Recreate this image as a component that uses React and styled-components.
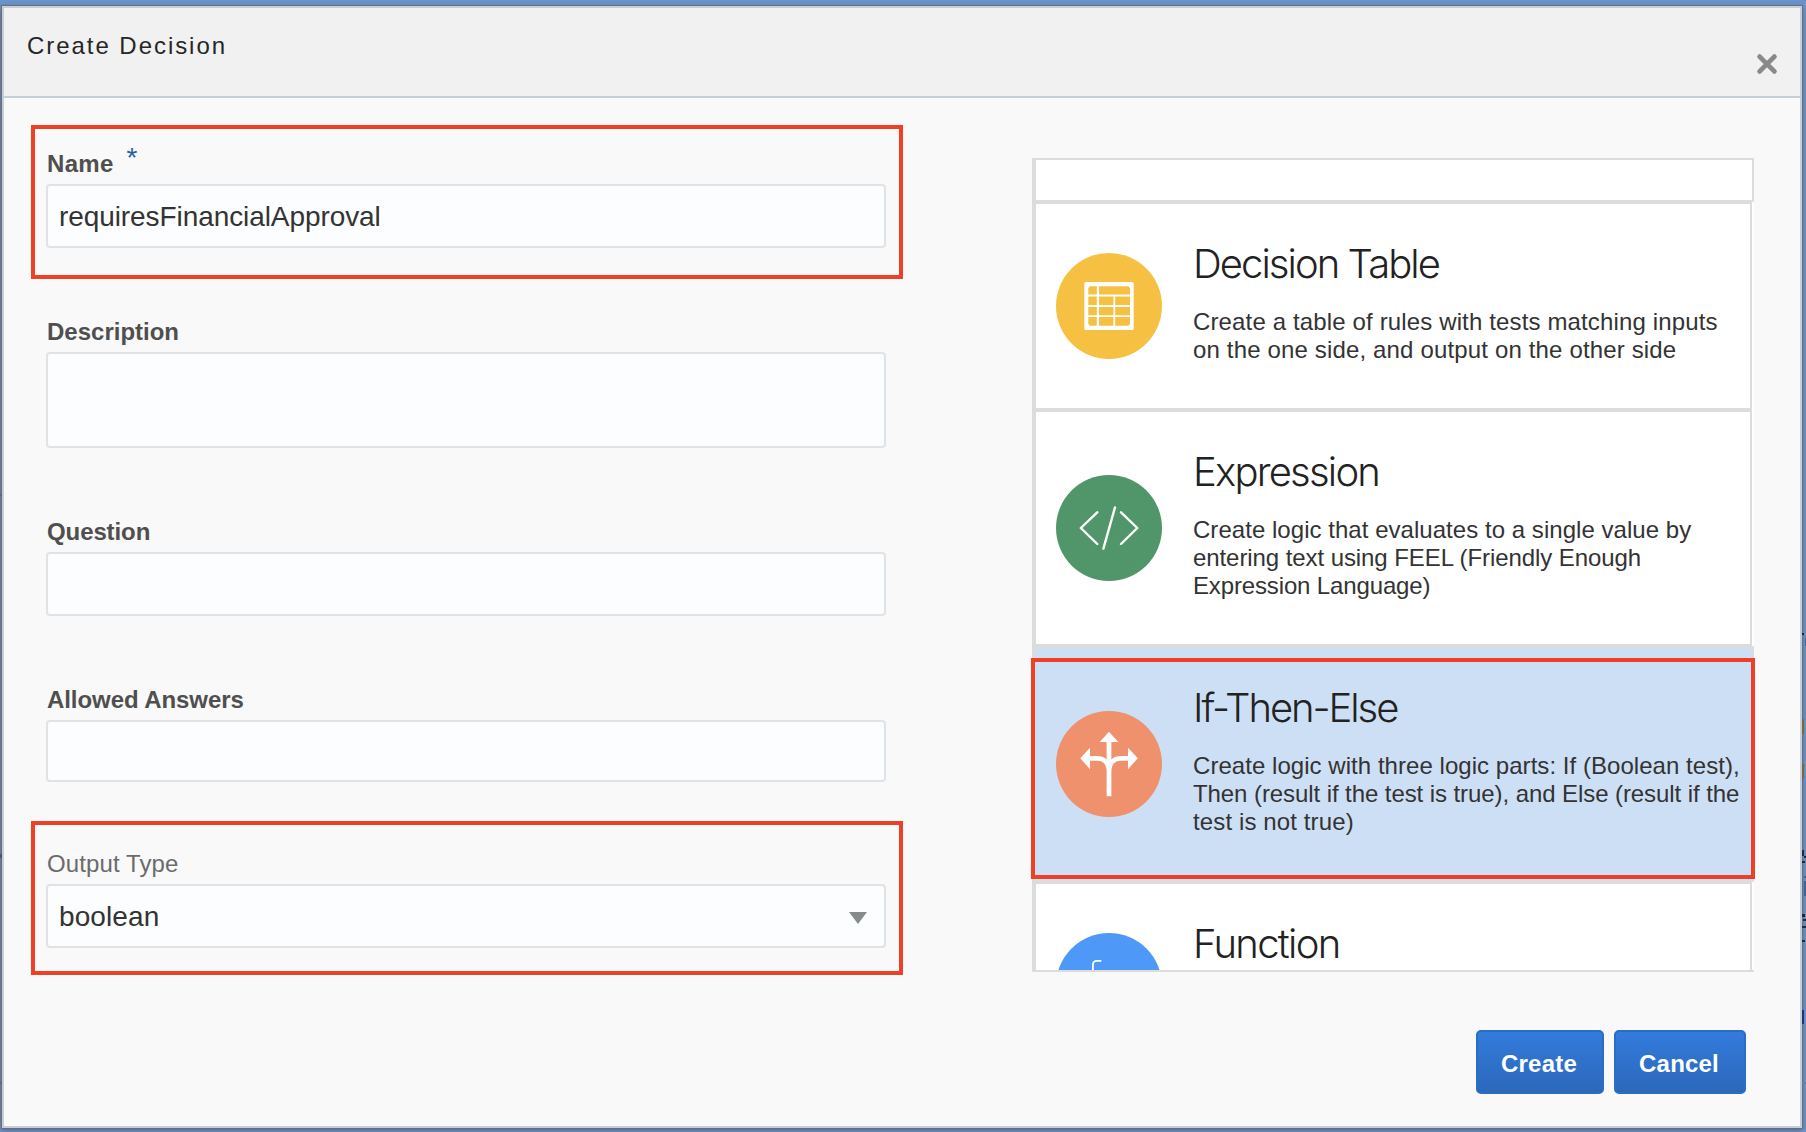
import React from "react";
import styled, { createGlobalStyle } from "styled-components";

const GlobalStyle = createGlobalStyle`
  * { box-sizing: border-box; }
  body {
    margin: 0;
    overflow: hidden;
    font-family: "Liberation Sans", Arial, sans-serif;
  }
`;

const Backdrop = styled.div`
  position: relative;
  width: 1806px;
  height: 1132px;
  padding: 6px 4px 4px 2px;
  overflow: hidden;
  background: #6a93cb;
`;

const BackdropMark = styled.div`
  position: absolute;
  left: ${(p) => p.$left ?? 1802}px;
  top: ${(p) => p.$top}px;
  width: ${(p) => p.$width ?? 4}px;
  height: ${(p) => p.$height}px;
  background: ${(p) => p.$color};
`;

const Dialog = styled.section`
  position: relative;
  display: flex;
  flex-direction: column;
  width: 1800px;
  height: 1122px;
  border: 2px solid #c4cfd8;
  background: #f9f9f9;
  box-shadow: 0 0 1px 1px rgba(110, 106, 104, 0.75), 0 2px 5px rgba(60, 60, 70, 0.5);
`;

const Header = styled.header`
  display: flex;
  justify-content: space-between;
  flex: none;
  height: 90px;
  padding: 24px 21px 0 23px;
  border-bottom: 2px solid #c4cfd8;
  background: #f1f1f1;
`;

const DialogTitle = styled.h1`
  margin: 0;
  font-size: 24px;
  font-weight: 400;
  line-height: 28px;
  letter-spacing: 1.95px;
  color: #262626;
`;

const CloseButton = styled.button`
  width: 24px;
  height: 24px;
  margin-top: 20px;
  padding: 0;
  border: 0;
  background: none;
  svg { display: block; }
`;

const Body = styled.div`
  display: flex;
  align-items: flex-start;
  flex: none;
  gap: 129px;
  height: 932px;
  padding: 27px 0 0 27px;
`;

const Form = styled.form`
  display: flex;
  flex-direction: column;
  gap: 14px;
  width: 872px;
`;

const Field = styled.div`
  display: flex;
  flex-direction: column;
  padding: ${(p) => p.$padTop ?? 21}px 13px ${(p) => p.$padBottom ?? 27}px 11px;
  border: 4px solid ${(p) => (p.$highlighted ? "#ee4027" : "transparent")};
`;

const Label = styled.label`
  display: flex;
  gap: 13px;
  height: 28px;
  margin: 0 0 6px 1px;
  font-size: 24px;
  font-weight: ${(p) => (p.$plain ? 400 : 700)};
  line-height: 28px;
  letter-spacing: ${(p) => p.$spacing ?? 0}px;
  color: ${(p) => (p.$plain ? "#6b6b6b" : "#4f4f4f")};
`;

const Required = styled.span`
  font-size: 28px;
  font-weight: 400;
  line-height: 15px;
  color: #2560ac;
`;

const Control = styled.div`
  display: flex;
  align-items: center;
  justify-content: space-between;
  height: ${(p) => p.$height ?? 64}px;
  padding: 2px 17px 0 11px;
  border: 2px solid #dfe3e6;
  border-radius: 4px;
  background: #fcfdfe;
  font-size: 28px;
  line-height: 32px;
  letter-spacing: ${(p) => p.$spacing ?? 0}px;
  color: #333;
`;

const SelectArrow = styled.svg`
  width: 18px;
  height: 12px;
  margin-top: 2px;
`;

const ListFrame = styled.div`
  position: relative;
  width: 722px;
  margin-top: 33px;
`;

const TypeList = styled.div`
  height: 814px;
  border: 2px solid #dcdcdc;
  border-right: 0;
  background: #fff;
  overflow: hidden;
`;

const TypeRow = styled.div`
  display: flex;
  align-items: center;
  gap: 31px;
  width: ${(p) => (p.$wide ? 720 : 718)}px;
  height: ${(p) => p.$height}px;
  padding-left: 20px;
  border: 2px solid #dcdcdc;
  background: ${(p) => (p.$selected ? "#cddff5" : "#fff")};
`;

const RowTail = styled(TypeRow)`
  border-top: 0;
`;

const Disc = styled.svg`
  flex: none;
  width: 106px;
  height: 106px;
  border-radius: 50%;
  background: ${(p) => p.$color};
`;

const TypeText = styled.div`
  align-self: flex-start;
  padding-top: 40px;
  white-space: nowrap;
`;

const TypeTitle = styled.h2`
  margin: 0 0 24px;
  font-family: Inter, "Liberation Sans", sans-serif;
  font-size: 40px;
  font-weight: 300;
  line-height: 40px;
  letter-spacing: ${(p) => p.$spacing ?? 0}px;
  color: #222;
`;

const TypeLine = styled.div`
  width: max-content;
  font-size: 24px;
  line-height: 28px;
  letter-spacing: ${(p) => p.$spacing ?? 0}px;
  color: #333;
`;

const Callout = styled.div`
  position: absolute;
  left: -1px;
  top: 500px;
  width: 724px;
  height: 221px;
  border: 4px solid #ee4027;
`;

const Footer = styled.footer`
  display: flex;
  justify-content: flex-end;
  gap: 10px;
  padding-right: 54px;
`;

const ActionButton = styled.button`
  width: ${(p) => p.$width}px;
  height: 64px;
  padding: 3px 2px 0 0;
  border: 2px solid #2b6dc5;
  border-radius: 5px;
  background: linear-gradient(#337bdc, #2b68ba);
  font-family: inherit;
  font-size: 24px;
  font-weight: 700;
  letter-spacing: 0.2px;
  color: #fff;
`;

const TableIcon = () => (
  <Disc $color="#f6c143" viewBox="0 0 106 106">
    <rect x="28.3" y="29" width="49.4" height="48" rx="1.5" fill="#fff" />
    <g fill="#f6c143">
      <path d="M34 33.3H40.8V41.4H32.3V35Z" />
      <path d="M43 33.3H72.5L74 35V41.4H43Z" />
      <path d="M32.3 43.4H40.8V52H32.3ZM43 43.4H57.4V52H43ZM59.2 43.4H74V52H59.2Z" />
      <path d="M32.3 53.9H40.8V62.2H32.3ZM43 53.9H57.4V62.2H43ZM59.2 53.9H74V62.2H59.2Z" />
      <path d="M32.3 64.1H40.8V72.7H34L32.3 71ZM43 64.1H57.4V72.7H43ZM59.2 64.1H74V71L72.5 72.7H59.2Z" />
    </g>
  </Disc>
);

const CodeIcon = () => (
  <Disc $color="#51966a" viewBox="0 0 106 106">
    <path
      d="M41.3 37.3L24.8 53L41.3 69M65 37.3L81.3 53L65 69M59 32.4L47.4 73.6"
      fill="none" stroke="#fff" strokeWidth="2.4" strokeLinecap="round" strokeLinejoin="round"
    />
  </Disc>
);

const BranchIcon = () => (
  <Disc $color="#ef916d" viewBox="0 0 106 106">
    <path d="M53 20.7L62.3 31H43.7ZM24.3 47.3L34 36.7V58.3ZM81.8 47.3L72 36.7V58.3Z" fill="#fff" />
    <path
      d="M53 30V85.3M33 47.3H41C48.5 47.3 53 52 53 61C53 52 57.5 47.3 65 47.3H73"
      fill="none" stroke="#fff" strokeWidth="4.7"
    />
  </Disc>
);

const FunctionIcon = () => (
  <Disc $color="#4e99f8" viewBox="0 0 106 106">
    <path d="M36.9 70V32Q36.9 27.8 41 27.8H45.3M31 44H43M50 50L64 70M64 50L50 70" fill="none" stroke="#fff" strokeWidth="1.8" />
  </Disc>
);

const types = [
  {
    title: "Decision Table", Icon: TableIcon, height: 208, spacing: -1.95,
    lines: [
      ["Create a table of rules with tests matching inputs", 0.14],
      ["on the one side, and output on the other side", 0.155],
    ],
  },
  {
    title: "Expression", Icon: CodeIcon, height: 236, spacing: -1.78,
    lines: [
      ["Create logic that evaluates to a single value by", 0.04],
      ["entering text using FEEL (Friendly Enough", -0.08],
      ["Expression Language)", -0.14],
    ],
  },
  {
    title: "If-Then-Else", Icon: BranchIcon, height: 236, spacing: -2.07, selected: true,
    lines: [
      ["Create logic with three logic parts: If (Boolean test),", 0.045],
      ["Then (result if the test is true), and Else (result if the", -0.08],
      ["test is not true)", 0.12],
    ],
  },
  { title: "Function", Icon: FunctionIcon, height: 208, spacing: -1.7, lines: [] },
];

const rightMarks = [
  { $top: 633, $height: 2, $width: 2, $color: "#17233a" },
  { $top: 638, $left: 1805, $width: 1, $height: 8, $color: "#3468b4" },
  { $top: 719, $height: 15, $width: 2, $color: "#80653a" },
  { $top: 764, $height: 15, $width: 2, $color: "#80653a" },
  { $top: 850, $height: 6, $width: 2, $color: "#1d2a44" },
  { $top: 856, $left: 1804, $height: 2, $width: 2, $color: "#1d2a44" },
  { $top: 861, $height: 2, $width: 3, $color: "#1d2a44" },
  { $top: 876, $left: 1804, $height: 2, $width: 2, $color: "#3a65a4" },
  { $top: 881, $left: 1804, $height: 15, $width: 2, $color: "#3a65a4" },
  { $top: 914, $height: 3, $width: 3, $color: "#1d2a44" },
  { $top: 919, $left: 1803, $height: 2, $width: 3, $color: "#1d2a44" },
  { $top: 926, $height: 2, $width: 4, $color: "#1d2a44" },
  { $top: 940, $height: 2, $width: 3, $color: "#1d2a44" },
  { $top: 1010, $height: 14, $width: 2, $color: "#18386e" },
  { $top: 1082, $height: 2, $width: 4, $color: "#5d7fb0" },
];

const leftMarks = [
  { $top: 494, $height: 2, $color: "#5c6680" },
  { $top: 854, $height: 4, $color: "#4a536e" },
  { $top: 1082, $height: 2, $color: "#5c6680" },
];

export default function App() {
  return (
    <>
      <GlobalStyle />
      <Backdrop>
        <BackdropMark $left={0} $top={12} $width={1} $height={1110} $color="#7087b2" />
        <Dialog>
          <Header>
            <DialogTitle>Create Decision</DialogTitle>
            <CloseButton aria-label="Close">
              <svg width="24" height="24" viewBox="0 0 24 24">
                <path d="M4.6 4.6L19.4 19.4M19.4 4.6L4.6 19.4" stroke="#87898b" strokeWidth="4.8" strokeLinecap="round" />
              </svg>
            </CloseButton>
          </Header>
          <Body>
            <Form>
              <Field $highlighted>
                <Label $spacing={0.3}>Name<Required>*</Required></Label>
                <Control $spacing={-0.08}>requiresFinancialApproval</Control>
              </Field>
              <Field>
                <Label>Description</Label>
                <Control $height={96} />
              </Field>
              <Field>
                <Label $spacing={-0.1}>Question</Label>
                <Control />
              </Field>
              <Field $padBottom={21}>
                <Label $spacing={-0.07}>Allowed Answers</Label>
                <Control $height={62} />
              </Field>
              <Field $highlighted $padTop={25} $padBottom={23}>
                <Label $plain $spacing={0.1}>Output Type</Label>
                <Control $spacing={0.1}>
                  boolean
                  <SelectArrow viewBox="0 0 18 12">
                    <path d="M0 0H18L9 12Z" fill="#868a8b" />
                  </SelectArrow>
                </Control>
              </Field>
            </Form>
            <ListFrame>
              <TypeList>
                <RowTail $wide $height={42} />
                {types.map(({ title, Icon, height, selected, spacing, lines }) => (
                  <TypeRow key={title} $height={height} $selected={selected} $wide={selected}>
                    <Icon />
                    <TypeText>
                      <TypeTitle $spacing={spacing}>{title}</TypeTitle>
                      {lines.map(([line, tracking]) => (
                        <TypeLine key={line} $spacing={tracking}>{line}</TypeLine>
                      ))}
                    </TypeText>
                  </TypeRow>
                ))}
              </TypeList>
              <Callout />
            </ListFrame>
          </Body>
          <Footer>
            <ActionButton $width={128}>Create</ActionButton>
            <ActionButton $width={132}>Cancel</ActionButton>
          </Footer>
        </Dialog>
        {rightMarks.map((mark) => <BackdropMark key={mark.$top} {...mark} />)}
        {leftMarks.map((mark) => <BackdropMark key={mark.$top} $left={0} $width={2} {...mark} />)}
      </Backdrop>
    </>
  );
}
